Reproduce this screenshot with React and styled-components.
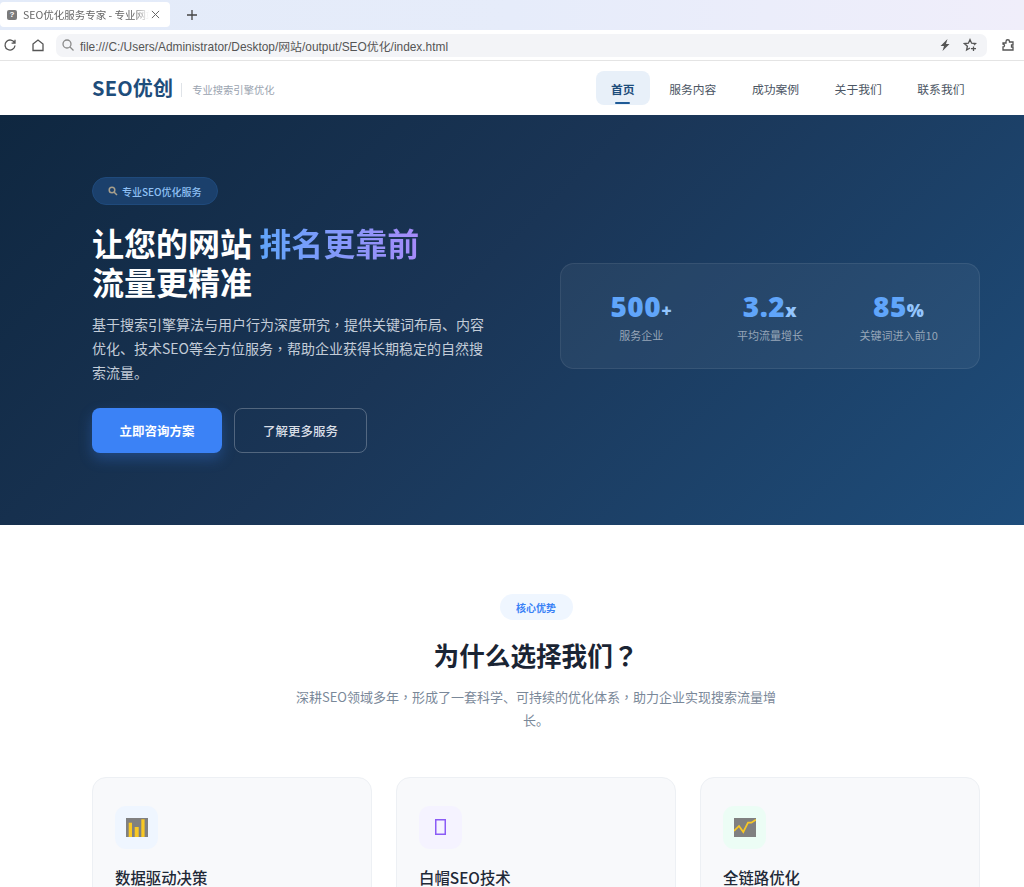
import React from 'react';
import styled, { createGlobalStyle } from 'styled-components';

const GlobalStyle = createGlobalStyle`
  html, body {
    margin: 0;
    padding: 0;
    height: 887px;
    overflow: hidden;
    background: #fff;
    font-family: "Noto Sans CJK SC", "Noto Sans", sans-serif;
  }
  * { box-sizing: border-box; }
`;

const TabStrip = styled.div`
  height: 30px;
  display: flex;
  align-items: flex-start;
  padding-top: 2px;
  background: linear-gradient(90deg, #e3ebf9 0%, #e6ecfa 50%, #f0eefa 100%);
`;

const Tab = styled.div`
  width: 170px;
  height: 25px;
  padding: 0 10px 0 7px;
  display: flex;
  align-items: center;
  background: #fff;
  border-radius: 4px;
  font-size: 10.5px;
  color: #666;
`;

const Favicon = styled.span`
  width: 10px;
  height: 10px;
  margin-right: 6px;
  flex: none;
  border-radius: 2px;
  background: #7b7b7b;
  color: #fff;
  font: bold 8px/10px "Liberation Sans", sans-serif;
  text-align: center;
`;

const TabTitle = styled.span`
  flex: 1;
  margin-right: 2px;
  overflow: hidden;
  white-space: nowrap;
  mask-image: linear-gradient(90deg, #000 88%, transparent 100%);
`;

const NewTab = styled.div`
  margin-left: 16px;
  height: 25px;
  display: flex;
  align-items: center;
`;

const Toolbar = styled.div`
  height: 31px;
  display: flex;
  align-items: center;
  padding: 0 9px 0 3px;
  background: #fff;
  border-bottom: 1px solid #e4e4e4;
`;

const ToolIcon = styled.svg`
  width: 14px;
  height: 14px;
  flex: none;
  margin-right: ${(p) => p.$gap || 0}px;
  fill: none;
  stroke: ${(p) => p.$color || '#555'};
  stroke-width: 1.3;
`;

const BoltIcon = styled.svg`
  width: 14px;
  height: 14px;
  flex: none;
  margin-right: 11px;
  fill: #555;
`;

const Address = styled.div`
  width: 931px;
  height: 23px;
  margin-right: 14px;
  padding: 0 10px 0 5px;
  display: flex;
  align-items: center;
  border-radius: 7px;
  background: #f3f4f7;
  font: 11.9px "Liberation Sans", "Noto Sans CJK SC", sans-serif;
  color: #555;
`;

const Url = styled.span`
  flex: 1;
  margin-left: 5px;
`;

const Nav = styled.nav`
  height: 54px;
  padding: 0 42px 0 92px;
  display: flex;
  align-items: center;
  justify-content: space-between;
  background: #fff;
`;

const Brand = styled.div`
  display: flex;
  align-items: center;
`;

const Logo = styled.div`
  margin-top: -2px;
  font-size: 20px;
  font-weight: 700;
  color: #1e4d7b;
  letter-spacing: 0.2px;
`;

const Slogan = styled.div`
  margin-left: 8px;
  padding-left: 10px;
  border-left: 1px solid #dfe3e8;
  font-size: 10.3px;
  line-height: 14px;
  margin-top: 3px;
  color: #9aa3af;
`;

const Menu = styled.div`
  display: flex;
  align-items: center;
  gap: 0.5px;
`;

const MenuItem = styled.div`
  position: relative;
  height: 34px;
  padding: 0 ${(p) => (p.$active ? 15 : 17.5)}px;
  margin-right: ${(p) => (p.$active ? 1.7 : 0)}px;
  display: flex;
  align-items: center;
  border-radius: 8px;
  font-size: 11.8px;
  font-weight: ${(p) => (p.$active ? 700 : 400)};
  color: ${(p) => (p.$active ? '#1e4d7b' : '#4b5563')};
  background: ${(p) => (p.$active ? '#e8f0f9' : 'transparent')};

  ${(p) => p.$active && `
    &::after {
      content: '';
      position: absolute;
      left: 50%;
      bottom: 1px;
      width: 15px;
      height: 2px;
      margin-left: -7.5px;
      border-radius: 1px;
      background: #1e5a96;
    }
  `}
`;

const Hero = styled.section`
  height: 410px;
  padding: 62px 44px 0 92px;
  display: flex;
  background: linear-gradient(135deg, #0f2740 0%, #1a3556 45%, #1e4d7b 100%);
`;

const HeroText = styled.div`
  width: 468px;
`;

const HeroBadge = styled.div`
  display: inline-flex;
  align-items: center;
  height: 28px;
  padding: 0 15px;
  border: 1px solid #1f4a7c;
  border-radius: 14px;
  background: #1b406c;
  font-size: 10px;
  font-weight: 500;
  color: #8fc0f5;
`;

const BadgeIcon = styled.svg`
  width: 10px;
  height: 10px;
  margin-right: 4px;
  fill: none;
  stroke: #a89f8c;
  stroke-width: 1.5;
`;

const HeroTitle = styled.h1`
  margin: 18px 0 0;
  font-size: 32px;
  line-height: 39px;
  font-weight: 700;
  color: #fff;
`;

const Accent = styled.span`
  background: linear-gradient(90deg, #60a5fa, #a78bfa);
  -webkit-background-clip: text;
  background-clip: text;
  color: transparent;
`;

const HeroDesc = styled.p`
  width: 402px;
  margin: 12px 0 0;
  font-size: 14px;
  line-height: 23.8px;
  color: #c3ccd8;
`;

const Punct = styled.span`
  font-family: "Noto Sans CJK TC", sans-serif;
`;

const HeroActions = styled.div`
  margin-top: 24px;
  display: flex;
  gap: 12px;
`;

const PrimaryBtn = styled.div`
  width: 130px;
  height: 45px;
  display: flex;
  align-items: center;
  justify-content: center;
  border-radius: 8px;
  background: #3b82f6;
  box-shadow: 0 6px 14px rgba(59, 130, 246, 0.3);
  font-size: 12.5px;
  font-weight: 700;
  color: #fff;
`;

const GhostBtn = styled.div`
  width: 133px;
  height: 45px;
  display: flex;
  align-items: center;
  justify-content: center;
  border: 1.5px solid rgba(255, 255, 255, 0.25);
  border-radius: 8px;
  font-size: 12.5px;
  font-weight: 500;
  color: #d8dee6;
`;

const Stats = styled.div`
  width: 420px;
  height: 106px;
  margin-top: 86px;
  padding: 0 16px;
  display: grid;
  grid-template-columns: repeat(3, 1fr);
  align-items: center;
  border: 1px solid rgba(255, 255, 255, 0.08);
  border-radius: 14px;
  background: rgba(255, 255, 255, 0.05);
`;

const Stat = styled.div`
  text-align: center;
`;

const StatValue = styled.div`
  font: 800 28px/32px "Open Sans", sans-serif;
  letter-spacing: 0.5px;
  color: #60a5fa;
`;

const StatUnit = styled.span`
  font-size: 18px;
  color: #93c5fd;
`;

const StatLabel = styled.div`
  margin-top: 2px;
  font-size: 11px;
  line-height: 15px;
  color: #97a6b8;
`;

const Why = styled.section`
  padding: 69px 44px 0 92px;
  display: flex;
  flex-direction: column;
  align-items: center;
  background: #fff;
`;

const Pill = styled.div`
  width: 73px;
  height: 26px;
  display: flex;
  align-items: center;
  justify-content: center;
  border-radius: 13px;
  background: #eff6ff;
  font-size: 10px;
  font-weight: 700;
  color: #3b82f6;
`;

const WhyTitle = styled.h2`
  margin: 16px 0 0;
  font-size: 25.6px;
  line-height: 38px;
  font-weight: 700;
  color: #1a2433;
`;

const WhyDesc = styled.p`
  width: 490px;
  margin: 11px 0 0;
  text-align: center;
  font-size: 13px;
  line-height: 23.4px;
  color: #7a8899;
`;

const Cards = styled.div`
  width: 100%;
  margin-top: 45px;
  display: grid;
  grid-template-columns: repeat(3, 280px);
  gap: 24px;
`;

const Card = styled.div`
  height: 200px;
  padding: 28px 22px;
  border: 1px solid #edf0f4;
  border-radius: 14px;
  background: #f8f9fb;
`;

const IconBox = styled.div`
  width: 43px;
  height: 43px;
  display: flex;
  align-items: center;
  justify-content: center;
  border-radius: 11px;
  background: ${(p) => p.$bg};
`;

const CardTitle = styled.h3`
  margin: 16px 0 0;
  font-size: 15.4px;
  line-height: 24px;
  font-weight: 500;
  color: #1f2937;
`;

const menu = ['服务内容', '成功案例', '关于我们', '联系我们'];

const stats = [
  { value: '500', unit: '+', label: '服务企业' },
  { value: '3.2', unit: 'x', label: '平均流量增长' },
  { value: '85', unit: '%', label: '关键词进入前10' },
];

const BarsIcon = () => (
  <svg width="22" height="19" viewBox="0 0 22 19">
    <rect width="22" height="19" fill="#808080" />
    <rect x="2.7" y="4.7" width="3.3" height="14.3" fill="#f9c823" />
    <rect x="8.7" y="9" width="4" height="10" fill="#f9c823" />
    <rect x="15.3" y="1.3" width="3.3" height="17.7" fill="#f9c823" />
  </svg>
);

const MissingGlyph = () => (
  <svg width="11" height="16" viewBox="0 0 11 16">
    <rect x="0.75" y="0.75" width="9.5" height="14.5" fill="none" stroke="#8b5cf6" strokeWidth="1.5" />
  </svg>
);

const LineIcon = () => (
  <svg width="22" height="19" viewBox="0 0 22 19">
    <rect width="22" height="19" fill="#808080" />
    <path d="M0 13 L5 8 L9.3 14 L14 4.7 L17.3 4.7 L22 1.7" fill="none" stroke="#f9c823" strokeWidth="1.7" />
  </svg>
);

export default function App() {
  return (
    <>
      <GlobalStyle />
      <TabStrip>
        <Tab>
          <Favicon>?</Favicon>
          <TabTitle>SEO优化服务专家 - 专业网站优化</TabTitle>
          <svg width="9" height="9" viewBox="0 0 10 10" stroke="#666" strokeWidth="1.1">
            <path d="M1 1 L9 9 M9 1 L1 9" />
          </svg>
        </Tab>
        <NewTab>
          <svg width="12" height="12" viewBox="0 0 12 12" stroke="#444" strokeWidth="1.3">
            <path d="M6 1 V11 M1 6 H11" />
          </svg>
        </NewTab>
      </TabStrip>
      <Toolbar>
        <ToolIcon $gap={14} viewBox="0 0 14 14">
          <path d="M11.6 5 A5 5 0 1 0 12 7.5 M12 1.8 V5.2 H8.6" />
        </ToolIcon>
        <ToolIcon $gap={11} viewBox="0 0 14 14">
          <path d="M2 6 L7 2 L12 6 V12.5 H2 Z" />
        </ToolIcon>
        <Address>
          <ToolIcon $color="#8a8a8a" viewBox="0 0 14 14">
            <circle cx="6" cy="6" r="4" />
            <path d="M9 9 L12.5 12.5" />
          </ToolIcon>
          <Url>file:///C:/Users/Administrator/Desktop/网站/output/SEO优化/index.html</Url>
          <BoltIcon viewBox="0 0 14 14">
            <path d="M9.5 1 L2.5 8 H6 L4.5 13 L11.5 6 H8 Z" />
          </BoltIcon>
          <ToolIcon viewBox="0 0 14 14">
            <path d="M7 10 L3.6 12 L4.4 8.2 L1.5 5.6 L5.4 5.2 L7 1.6 L8.6 5.2 L12.5 5.6 L11 7 M8 10.7 H13 M10.5 8.5 V13" />
          </ToolIcon>
        </Address>
        <ToolIcon viewBox="0 0 14 14">
          <path d="M2 5 H5 V3.5 A1.7 1.7 0 0 1 8.5 3.5 V4 H12 V7 H10.5 V9 H12 V12 H2 V9 A1.5 1.5 0 0 0 2 6 Z" />
        </ToolIcon>
      </Toolbar>

      <Nav>
        <Brand>
          <Logo>SEO优创</Logo>
          <Slogan>专业搜索引擎优化</Slogan>
        </Brand>
        <Menu>
          <MenuItem $active>首页</MenuItem>
          {menu.map((m) => (
            <MenuItem key={m}>{m}</MenuItem>
          ))}
        </Menu>
      </Nav>

      <Hero>
        <HeroText>
          <HeroBadge>
            <BadgeIcon viewBox="0 0 10 10">
              <circle cx="4" cy="4" r="2.8" />
              <path d="M6 6 L9 9" />
            </BadgeIcon>
            专业SEO优化服务
          </HeroBadge>
          <HeroTitle>
            让您的网站 <Accent>排名更靠前</Accent>
            <br />
            流量更精准
          </HeroTitle>
          <HeroDesc>
            基于搜索引擎算法与用户行为深度研究<Punct>，</Punct>提供关键词布局、内容优化、技术SEO等全方位服务<Punct>，</Punct>帮助企业获得长期稳定的自然搜索流量。
          </HeroDesc>
          <HeroActions>
            <PrimaryBtn>立即咨询方案</PrimaryBtn>
            <GhostBtn>了解更多服务</GhostBtn>
          </HeroActions>
        </HeroText>
        <Stats>
          {stats.map((s) => (
            <Stat key={s.label}>
              <StatValue>
                {s.value}
                <StatUnit>{s.unit}</StatUnit>
              </StatValue>
              <StatLabel>{s.label}</StatLabel>
            </Stat>
          ))}
        </Stats>
      </Hero>

      <Why>
        <Pill>核心优势</Pill>
        <WhyTitle>为什么选择我们<Punct>？</Punct></WhyTitle>
        <WhyDesc>
          深耕SEO领域多年<Punct>，</Punct>形成了一套科学、可持续的优化体系<Punct>，</Punct>助力企业实现搜索流量增长。
        </WhyDesc>
        <Cards>
          <Card>
            <IconBox $bg="#eff6ff"><BarsIcon /></IconBox>
            <CardTitle>数据驱动决策</CardTitle>
          </Card>
          <Card>
            <IconBox $bg="#f5f3ff"><MissingGlyph /></IconBox>
            <CardTitle>白帽SEO技术</CardTitle>
          </Card>
          <Card>
            <IconBox $bg="#ecfdf5"><LineIcon /></IconBox>
            <CardTitle>全链路优化</CardTitle>
          </Card>
        </Cards>
      </Why>
    </>
  );
}
